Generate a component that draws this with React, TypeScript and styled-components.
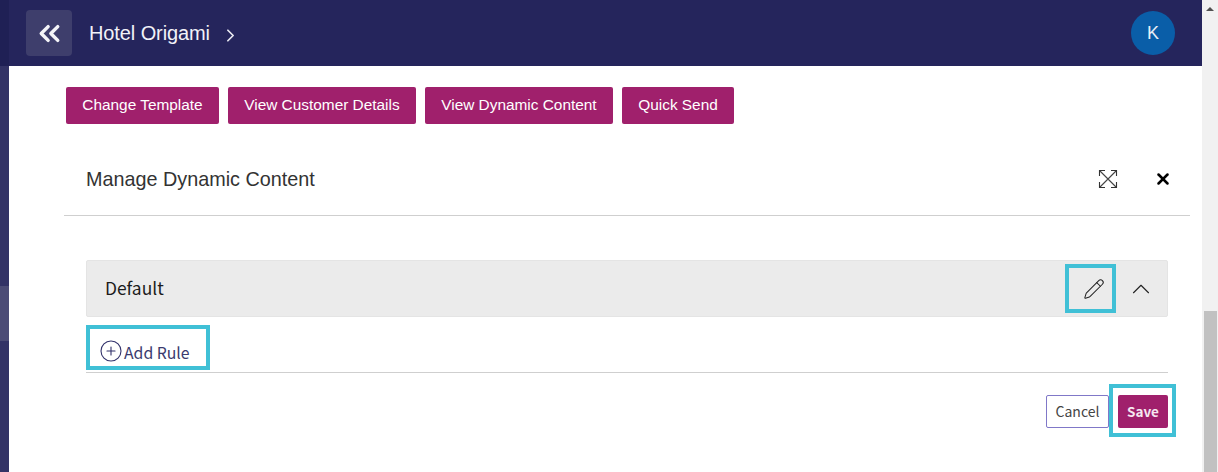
import React from 'react'
import styled, { createGlobalStyle } from 'styled-components'
import { ChevronRight, ChevronsLeft, ChevronUp, Pencil, CirclePlus, X } from 'lucide-react'

const GlobalStyle = createGlobalStyle`
  html, body { margin: 0; padding: 0; height: 472px; overflow: hidden; background: #fff; }
  #root { height: 472px; }
  * { box-sizing: border-box; }
`

export default function App() {
  return (
    <Shell>
      <GlobalStyle />
      <SideRail>
        <SideTop />
        <SideActive />
      </SideRail>
      <Main>
        <NavBar>
          <BackButton><ChevronsLeft size={33} strokeWidth={2.5} /></BackButton>
          <HotelName>Hotel Origami</HotelName>
          <Crumb><ChevronRight size={21} strokeWidth={2} /></Crumb>
          <Avatar>K</Avatar>
        </NavBar>
        <Toolbar>
          <ActionButton>Change Template</ActionButton>
          <ActionButton>View Customer Details</ActionButton>
          <ActionButton>View Dynamic Content</ActionButton>
          <ActionButton>Quick Send</ActionButton>
        </Toolbar>
        <PanelHeader>
          <PanelTitle>Manage Dynamic Content</PanelTitle>
          <HeaderIcon>
            <svg width="20" height="20" viewBox="0 0 20 20" fill="none" stroke="#444" strokeWidth="1.1">
              <path d="M2 2 L18 18 M18 2 L2 18" />
              <path d="M1.5 7 V1.5 H7 M13 1.5 H18.5 V7 M18.5 13 V18.5 H13 M7 18.5 H1.5 V13" stroke="#333" />
            </svg>
          </HeaderIcon>
          <CloseIcon><X size={18} strokeWidth={3.4} color="#000" /></CloseIcon>
        </PanelHeader>
        <PanelBody>
          <AccordionRow>
            <AccordionLabel>Default</AccordionLabel>
            <EditSlot>
              <Pencil size={22} strokeWidth={1.1} color="#222" />
              <Ring />
            </EditSlot>
            <CollapseSlot><ChevronUp size={30} strokeWidth={0.9} color="#222" /></CollapseSlot>
          </AccordionRow>
          <RuleRow>
            <AddRule>
              <CirclePlus size={24} strokeWidth={1.1} color="#31316b" />
              <span>Add Rule</span>
              <Ring />
            </AddRule>
          </RuleRow>
          <FormActions>
            <CancelButton>Cancel</CancelButton>
            <SaveButton>
              Save
              <SaveRing />
            </SaveButton>
          </FormActions>
        </PanelBody>
      </Main>
      <ScrollTrack>
        <ScrollArrow />
        <ScrollThumb />
      </ScrollTrack>
    </Shell>
  )
}

const Shell = styled.div`
display: flex;
width: 1218px;
height: 472px;
overflow: hidden;
font-family: 'Liberation Sans', Arial, sans-serif;
`

const SideRail = styled.div`
width: 9px;
flex: none;
background: #333366;
`

const SideTop = styled.div`
height: 66px;
background: #1f2055;
`

const SideActive = styled.div`
height: 55px;
margin-top: 220px;
background: #4c4c76;
`

const Main = styled.div`
flex: 1;
min-width: 0;
display: flex;
flex-direction: column;
background: #fff;
`

const NavBar = styled.div`
height: 66px;
flex: none;
display: flex;
align-items: center;
padding: 0 27px 0 17px;
background: #25255c;
color: #fff;
`

const BackButton = styled.div`
width: 46px;
height: 46px;
display: flex;
align-items: center;
justify-content: center;
border-radius: 4px;
background: #3e3e6c;
color: #f4f4f8;
`

const HotelName = styled.div`
margin-left: 17px;
font-size: 20px;
letter-spacing: -0.1px;
color: #f2f2f8;
`

const Crumb = styled.div`
display: flex;
margin: 5px 0 0 10px;
color: #e8e8f0;
`

const Avatar = styled.div`
width: 44px;
height: 44px;
margin-left: auto;
display: flex;
align-items: center;
justify-content: center;
border-radius: 50%;
background: #0a5ea8;
color: #e8eef6;
font-size: 18px;
`

const Toolbar = styled.div`
display: flex;
gap: 9px;
padding: 21px 0 0 57px;
`

const ActionButton = styled.button`
height: 37px;
padding: 0 16.3px 2px;
border: none;
border-radius: 2px;
background: #a0206c;
color: #fff;
font-family: inherit;
font-size: 15.4px;
`

const PanelHeader = styled.div`
height: 92px;
margin: 0 12px 0 55px;
display: flex;
align-items: center;
padding: 19px 0 0 22px;
border-bottom: 1px solid #cfcfcf;
`

const PanelTitle = styled.div`
flex: 1;
font-size: 19.8px;
color: #333;
`

const HeaderIcon = styled.div`
display: flex;
margin-right: 36px;
`

const CloseIcon = styled.div`
display: flex;
margin-right: 18px;
`

const PanelBody = styled.div`
margin: 44px 34px 0 77px;
font-family: 'Noto Sans CJK SC', 'Open Sans', sans-serif;
`

const AccordionRow = styled.div`
height: 57px;
display: flex;
align-items: center;
padding-left: 18px;
border: 1px solid #e4e4e4;
border-radius: 2px;
background: #ebebeb;
`

const AccordionLabel = styled.div`
flex: 1;
padding-bottom: 2px;
font-size: 17.4px;
color: #1c1c1c;
`

const EditSlot = styled.div`
position: relative;
width: 43px;
height: 41px;
display: flex;
align-items: center;
justify-content: center;
padding-left: 6px;
margin-right: 2px;
`

const CollapseSlot = styled.div`
width: 53px;
display: flex;
justify-content: center;
`

const Ring = styled.span`
position: absolute;
inset: -4px;
border: 4px solid #40c0d6;
pointer-events: none;
`

const RuleRow = styled.div`
height: 56px;
display: flex;
align-items: flex-end;
border-bottom: 1px solid #cfcfcf;
`

const AddRule = styled.div`
position: relative;
width: 116px;
height: 37px;
margin: 0 0 6px 4px;
display: flex;
align-items: center;
gap: 1px;
padding: 6px 0 0 9px;
font-size: 15.8px;
color: #3a3a6e;

span:not(:last-child) {
  padding-top: 3px;
}
`

const FormActions = styled.div`
display: flex;
justify-content: flex-end;
gap: 9px;
margin-top: 22px;
`

const CancelButton = styled.button`
width: 63px;
height: 33px;
padding: 0 0 2px;
border: 1px solid #8078c8;
border-radius: 2px;
background: #fff;
color: #444;
font-family: inherit;
font-size: 14px;
`

const SaveButton = styled.button`
position: relative;
width: 50px;
height: 33px;
padding: 0 0 2px;
border: none;
border-radius: 2px;
background: #a0206c;
color: #f6e8f0;
font-family: inherit;
font-size: 13.5px;
font-weight: 700;
`

const SaveRing = styled(Ring)`
inset: -11px -8px -9px -9px;
`

const ScrollTrack = styled.div`
width: 16px;
flex: none;
display: flex;
flex-direction: column;
align-items: center;
background: #f1f1f1;
`

const ScrollArrow = styled.div`
margin-top: 7px;
border-left: 4px solid transparent;
border-right: 4px solid transparent;
border-bottom: 4px solid #505050;
`

const ScrollThumb = styled.div`
width: 13px;
height: 161px;
margin-top: auto;
background: #c1c1c1;
`
